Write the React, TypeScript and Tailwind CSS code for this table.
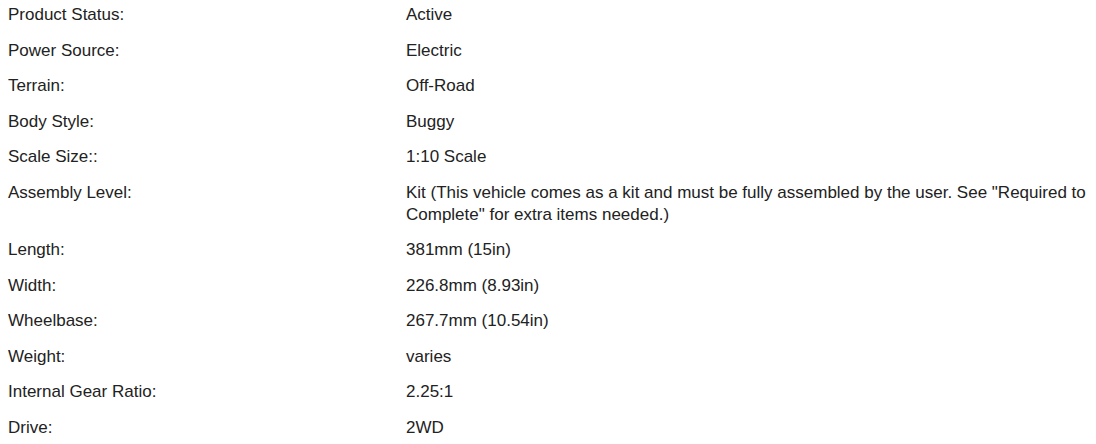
import React from 'react';

type Spec = { label: string; value: string };

const specs: Spec[] = [
  { label: 'Product Status:', value: 'Active' },
  { label: 'Power Source:', value: 'Electric' },
  { label: 'Terrain:', value: 'Off-Road' },
  { label: 'Body Style:', value: 'Buggy' },
  { label: 'Scale Size::', value: '1:10 Scale' },
  {
    label: 'Assembly Level:',
    value:
      'Kit (This vehicle comes as a kit and must be fully assembled by the user. See "Required to Complete" for extra items needed.)',
  },
  { label: 'Length:', value: '381mm (15in)' },
  { label: 'Width:', value: '226.8mm (8.93in)' },
  { label: 'Wheelbase:', value: '267.7mm (10.54in)' },
  { label: 'Weight:', value: 'varies' },
  { label: 'Internal Gear Ratio:', value: '2.25:1' },
  { label: 'Drive:', value: '2WD' },
];

export default function App() {
  return (
    <div className="w-[1096px] h-[444px] overflow-hidden bg-white px-2 font-['Liberation_Sans',Arial,sans-serif] text-[17px] leading-[22px] text-[#222]">
      {specs.map((spec) => (
        <div key={spec.label} className="grid grid-cols-[398px_1fr] pt-[4px] pb-[9.5px]">
          <div>{spec.label}</div>
          <div>{spec.value}</div>
        </div>
      ))}
    </div>
  );
}
